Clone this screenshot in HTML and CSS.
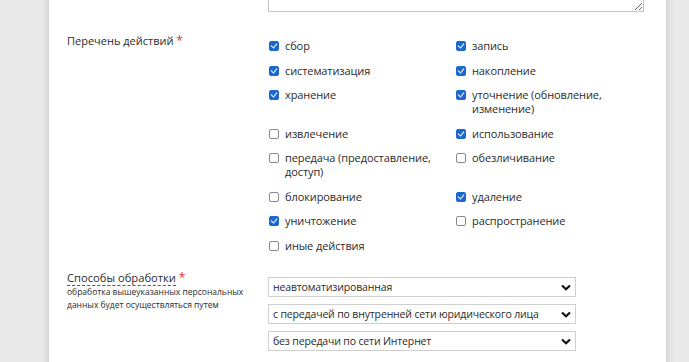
FILE: index.html
```html
<!doctype html>
<html>

<head>
    <meta charset="UTF-8">
    <title>Перечень действий</title>
    <link rel="stylesheet" href="styles.css">
</head>

<body>
    <div class="card">
        <div class="form-row top-row">
            <div class="form-label"></div>
            <div class="form-field">
                <textarea class="note"></textarea>
            </div>
        </div>

        <div class="form-row">
            <div class="form-label">Перечень действий <span class="req">*</span></div>
            <div class="form-field">
                <div class="actions">
                    <label class="check"><input type="checkbox" checked><span>сбор</span></label>
                    <label class="check"><input type="checkbox" checked><span>запись</span></label>
                    <label class="check"><input type="checkbox" checked><span>систематизация</span></label>
                    <label class="check"><input type="checkbox" checked><span>накопление</span></label>
                    <label class="check"><input type="checkbox" checked><span>хранение</span></label>
                    <label class="check"><input type="checkbox" checked><span>уточнение (обновление, изменение)</span></label>
                    <label class="check"><input type="checkbox"><span>извлечение</span></label>
                    <label class="check"><input type="checkbox" checked><span>использование</span></label>
                    <label class="check"><input type="checkbox"><span>передача (предоставление, доступ)</span></label>
                    <label class="check"><input type="checkbox"><span>обезличивание</span></label>
                    <label class="check"><input type="checkbox"><span>блокирование</span></label>
                    <label class="check"><input type="checkbox" checked><span>удаление</span></label>
                    <label class="check"><input type="checkbox" checked><span>уничтожение</span></label>
                    <label class="check"><input type="checkbox"><span>распространение</span></label>
                    <label class="check"><input type="checkbox"><span>иные действия</span></label>
                </div>
            </div>
        </div>

        <div class="form-row">
            <div class="form-label">
                <span class="hint-title">Способы обработки</span> <span class="req">*</span>
                <div class="hint">обработка вышеуказанных персональных данных будет осуществляться путем</div>
            </div>
            <div class="form-field selects">
                <div class="select-wrap">
                    <select><option>неавтоматизированная</option></select>
                    <svg class="chevron" width="10" height="7" viewBox="0 0 10 7"><path d="M1 1.5 L5 5.2 L9 1.5" fill="none" stroke="#111" stroke-width="2.2"/></svg>
                </div>
                <div class="select-wrap">
                    <select><option>с передачей по внутренней сети юридического лица</option></select>
                    <svg class="chevron" width="10" height="7" viewBox="0 0 10 7"><path d="M1 1.5 L5 5.2 L9 1.5" fill="none" stroke="#111" stroke-width="2.2"/></svg>
                </div>
                <div class="select-wrap">
                    <select><option>без передачи по сети Интернет</option></select>
                    <svg class="chevron" width="10" height="7" viewBox="0 0 10 7"><path d="M1 1.5 L5 5.2 L9 1.5" fill="none" stroke="#111" stroke-width="2.2"/></svg>
                </div>
            </div>
        </div>
    </div>
</body>

</html>
```

FILE: styles.css
```css
html {
    --text: #2b2b2b;
    --req: #e0312f;
    --check-blue: #1c68cf;
    --field-border: #cfcfcf;
}
body {
    margin: 0;
    height: 362px;
    overflow: hidden;
    background-color: #e9e9e9;
    font-family: "Open Sans", "Noto Sans", sans-serif;
    font-size: 11px;
    color: var(--text);
}
.card {
    margin: -40px 0 0 49px;
    width: 617px;
    height: 420px;
    background-color: #fff;
    box-shadow: 0 0 8px rgba(0, 0, 0, 0.18);
    padding: 0 0 0 18px;
    box-sizing: border-box;
}
.form-row {
    display: flex;
    margin-bottom: 17px;
}
.form-label {
    width: 201px;
    flex-shrink: 0;
    line-height: 16px;
}
.req {
    color: var(--req);
}

/* textarea at the top, mostly scrolled off */
.top-row {
    margin-bottom: 21px;
}
.note {
    display: block;
    width: 376px;
    height: 52px;
    margin: 0;
    border: 1px solid #c4c4c4;
    box-sizing: border-box;
    resize: vertical;
}

/* чекбоксы в две колонки */
.actions {
    display: grid;
    grid-template-columns: 187px 187px;
    row-gap: 10.5px;
    padding-top: 6px;
}
.check {
    display: flex;
    align-items: flex-start;
    line-height: 14px;
    letter-spacing: -0.1px;
}
.check span {
    max-width: 152px;
}
.check input {
    appearance: none;
    -webkit-appearance: none;
    width: 10px;
    height: 10px;
    margin: 2px 6px 0 1px;
    border: 1px solid #8a8a8a;
    border-radius: 2px;
    box-sizing: border-box;
    position: relative;
    flex-shrink: 0;
    background: #fff;
}
.check input:checked {
    background: var(--check-blue);
    border-color: var(--check-blue);
}
.check input:checked::after {
    content: "";
    position: absolute;
    left: 2px;
    top: 0px;
    width: 3px;
    height: 5px;
    border: solid #fff;
    border-width: 0 1.6px 1.6px 0;
    transform: rotate(40deg);
}

/* способы обработки */
.form-label .hint-title {
    font-size: 11.2px;
    border-bottom: 1px dashed #555;
}
.form-label .req {
    font-size: 12px;
}
.hint {
    font-size: 8.5px;
    line-height: 13px;
    margin-top: -1px;
    width: 195px;
}
.selects {
    display: flex;
    flex-direction: column;
    gap: 7px;
    padding-top: 7px;
}
.select-wrap {
    position: relative;
    width: 308px;
}
.select-wrap select {
    appearance: none;
    -webkit-appearance: none;
    display: block;
    width: 100%;
    height: 20px;
    margin: 0;
    padding: 0 0 0 4px;
    border: 1px solid var(--field-border);
    border-radius: 0;
    background: #fff;
    font-family: "Open Sans", "Noto Sans", sans-serif;
    font-size: 10.5px;
    letter-spacing: -0.15px;
    color: var(--text);
}
.chevron {
    position: absolute;
    right: 5px;
    top: 7px;
}
```
